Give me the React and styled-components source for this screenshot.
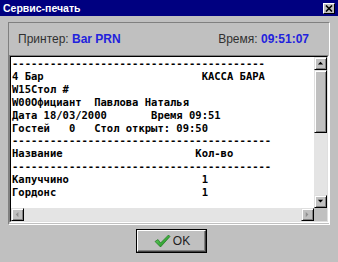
import React from "react";
import styled, { createGlobalStyle } from "styled-components";

const Global = createGlobalStyle`
  html, body { margin: 0; padding: 0; background: #c0c0c0; }
  body { width: 338px; height: 262px; overflow: hidden; font-family: "Liberation Sans", Arial, sans-serif; }
`;

const Window = styled.div`
  width: 338px;
  height: 262px;
  background: #c0c0c0;
  display: flex;
  flex-direction: column;
`;

const TitleBar = styled.div`
  height: 16px;
  background: #000080;
  display: flex;
  align-items: center;
  justify-content: space-between;
  padding: 0 3px 0 3px;
`;

const Title = styled.span`
  color: #fff;
  font-weight: bold;
  font-size: 10.5px;
`;

const CloseButton = styled.div`
  width: 12px;
  height: 11px;
  box-sizing: border-box;
  background: #c0c0c0;
  border-top: 1px solid #fff;
  border-left: 1px solid #fff;
  border-right: 1px solid #000;
  border-bottom: 1px solid #000;
  display: flex;
  align-items: center;
  justify-content: center;
`;

const Body = styled.div`
  padding: 6px 8px 0 8px;
  display: flex;
  flex-direction: column;
`;

const Panel = styled.div`
  height: 203px;
  box-sizing: border-box;
  border-top: 1px solid #808080;
  border-left: 1px solid #808080;
  border-right: 1px solid #fff;
  border-bottom: 1px solid #fff;
  display: flex;
  flex-direction: column;
`;

const Header = styled.div`
  height: 32px;
  display: flex;
  align-items: center;
  justify-content: space-between;
  padding: 0 20px 0 9px;
  font-size: 12px;
  color: #303030;
`;

const Value = styled.span`
  color: #2222dd;
  font-weight: bold;
`;

const TextBox = styled.div`
  flex: 1;
  margin-bottom: 1px;
  border-top: 1px solid #808080;
  border-left: 1px solid #808080;
  border-right: 1px solid #fff;
  border-bottom: 1px solid #fff;
  display: flex;
`;

const TextInner = styled.div`
  flex: 1;
  border-top: 1px solid #000;
  border-left: 1px solid #000;
  border-right: 1px solid #dfdfdf;
  border-bottom: 1px solid #dfdfdf;
  display: grid;
  grid-template-columns: 1fr 13px;
  grid-template-rows: 1fr 13px;
`;

const Content = styled.div`
  background: #fff;
  overflow: hidden;
`;

const Receipt = styled.pre`
  margin: 0;
  padding: 0 0 0 1px;
  font-family: "DejaVu Sans Mono", "Liberation Mono", monospace;
  font-weight: bold;
  font-size: 10.5px;
  line-height: 12.9px;
  color: #000;
  white-space: pre;
`;

const ScrollV = styled.div`
  display: flex;
  flex-direction: column;
  background: #e4e4e4;
`;

const ScrollH = styled.div`
  display: flex;
  background: #e4e4e4;
`;

const Corner = styled.div`
  background: #c0c0c0;
`;

const Arrow = styled.div`
  width: 13px;
  height: 13px;
  flex: none;
  box-sizing: border-box;
  background: #c0c0c0;
  border-top: 1px solid #dfdfdf;
  border-left: 1px solid #dfdfdf;
  border-right: 1px solid #000;
  border-bottom: 1px solid #000;
  box-shadow: inset 1px 1px 0 #fff, inset -1px -1px 0 #808080;
  display: flex;
  align-items: center;
  justify-content: center;
`;

const Thumb = styled.div`
  height: 63px;
  flex: none;
  box-sizing: border-box;
  background: #c0c0c0;
  border-top: 1px solid #dfdfdf;
  border-left: 1px solid #dfdfdf;
  border-right: 1px solid #000;
  border-bottom: 1px solid #000;
  box-shadow: inset 1px 1px 0 #fff, inset -1px -1px 0 #808080;
`;

const Track = styled.div`
  flex: 1;
`;

const Footer = styled.div`
  display: flex;
  justify-content: center;
  padding: 4px 0 0 5px;
`;

const OkButton = styled.div`
  width: 71px;
  height: 24px;
  box-sizing: border-box;
  border: 1px solid #000;
  display: flex;
`;

const OkFace = styled.div`
  flex: 1;
  border-top: 1px solid #fff;
  border-left: 1px solid #fff;
  border-right: 1px solid #404040;
  border-bottom: 1px solid #404040;
  box-shadow: inset -1px -1px 0 #808080;
  display: flex;
  align-items: center;
  justify-content: center;
  gap: 2px;
  font-size: 12px;
  color: #202020;
  padding-left: 1px;
`;

const Tri = ({ dir, color }) => {
  const pts = {
    up: "1,5 4,2 7,5",
    down: "1,2 4,5 7,2",
    left: "5,1 2,4 5,7",
    right: "2,1 5,4 2,7",
  }[dir];
  return (
    <svg width="7" height="7" viewBox="0 0 8 8">
      <polygon points={pts} fill={color} />
    </svg>
  );
};

const text = [
  "----------------------------------------",
  "4 Бар                         КАССА БАРА",
  "W15Стол #",
  "W00Официант  Павлова Наталья",
  "Дата 18/03/2000       Время 09:51",
  "Гостей   0   Стол открыт: 09:50",
  "-----------------------------------------",
  "Название                     Кол-во",
  "-----------------------------------------",
  "Капуччино                     1",
  "Гордонс                       1",
].join("\n");

export default function App() {
  return (
    <Window>
      <Global />
      <TitleBar>
        <Title>Сервис-печать</Title>
        <CloseButton>
          <svg width="8" height="7" viewBox="0 0 8 7">
            <path d="M1 0.5 L7 6.5 M7 0.5 L1 6.5" stroke="#000" strokeWidth="1.6" />
          </svg>
        </CloseButton>
      </TitleBar>
      <Body>
        <Panel>
          <Header>
            <span>
              Принтер: <Value>Bar PRN</Value>
            </span>
            <span>
              Время: <Value>09:51:07</Value>
            </span>
          </Header>
          <TextBox>
            <TextInner>
              <Content>
                <Receipt>{text}</Receipt>
              </Content>
              <ScrollV>
                <Arrow>
                  <Tri dir="up" color="#000" />
                </Arrow>
                <Thumb />
                <Track />
                <Arrow>
                  <Tri dir="down" color="#000" />
                </Arrow>
              </ScrollV>
              <ScrollH>
                <Arrow>
                  <Tri dir="left" color="#909090" />
                </Arrow>
                <Track />
                <Arrow>
                  <Tri dir="right" color="#909090" />
                </Arrow>
              </ScrollH>
              <Corner />
            </TextInner>
          </TextBox>
        </Panel>
        <Footer>
          <OkButton>
            <OkFace>
              <svg width="17" height="14" viewBox="0 0 17 14">
                <defs>
                  <linearGradient id="g" x1="0" y1="0" x2="1" y2="1">
                    <stop offset="0" stopColor="#6fd36f" />
                    <stop offset="1" stopColor="#128a12" />
                  </linearGradient>
                </defs>
                <path
                  d="M1 7.5 L4 5.5 L6.5 9 L14.5 1 L16 2.5 L6.5 13 Z"
                  fill="url(#g)"
                  stroke="#0d6b0d"
                  strokeWidth="0.6"
                />
              </svg>
              <span>OK</span>
            </OkFace>
          </OkButton>
        </Footer>
      </Body>
    </Window>
  );
}
